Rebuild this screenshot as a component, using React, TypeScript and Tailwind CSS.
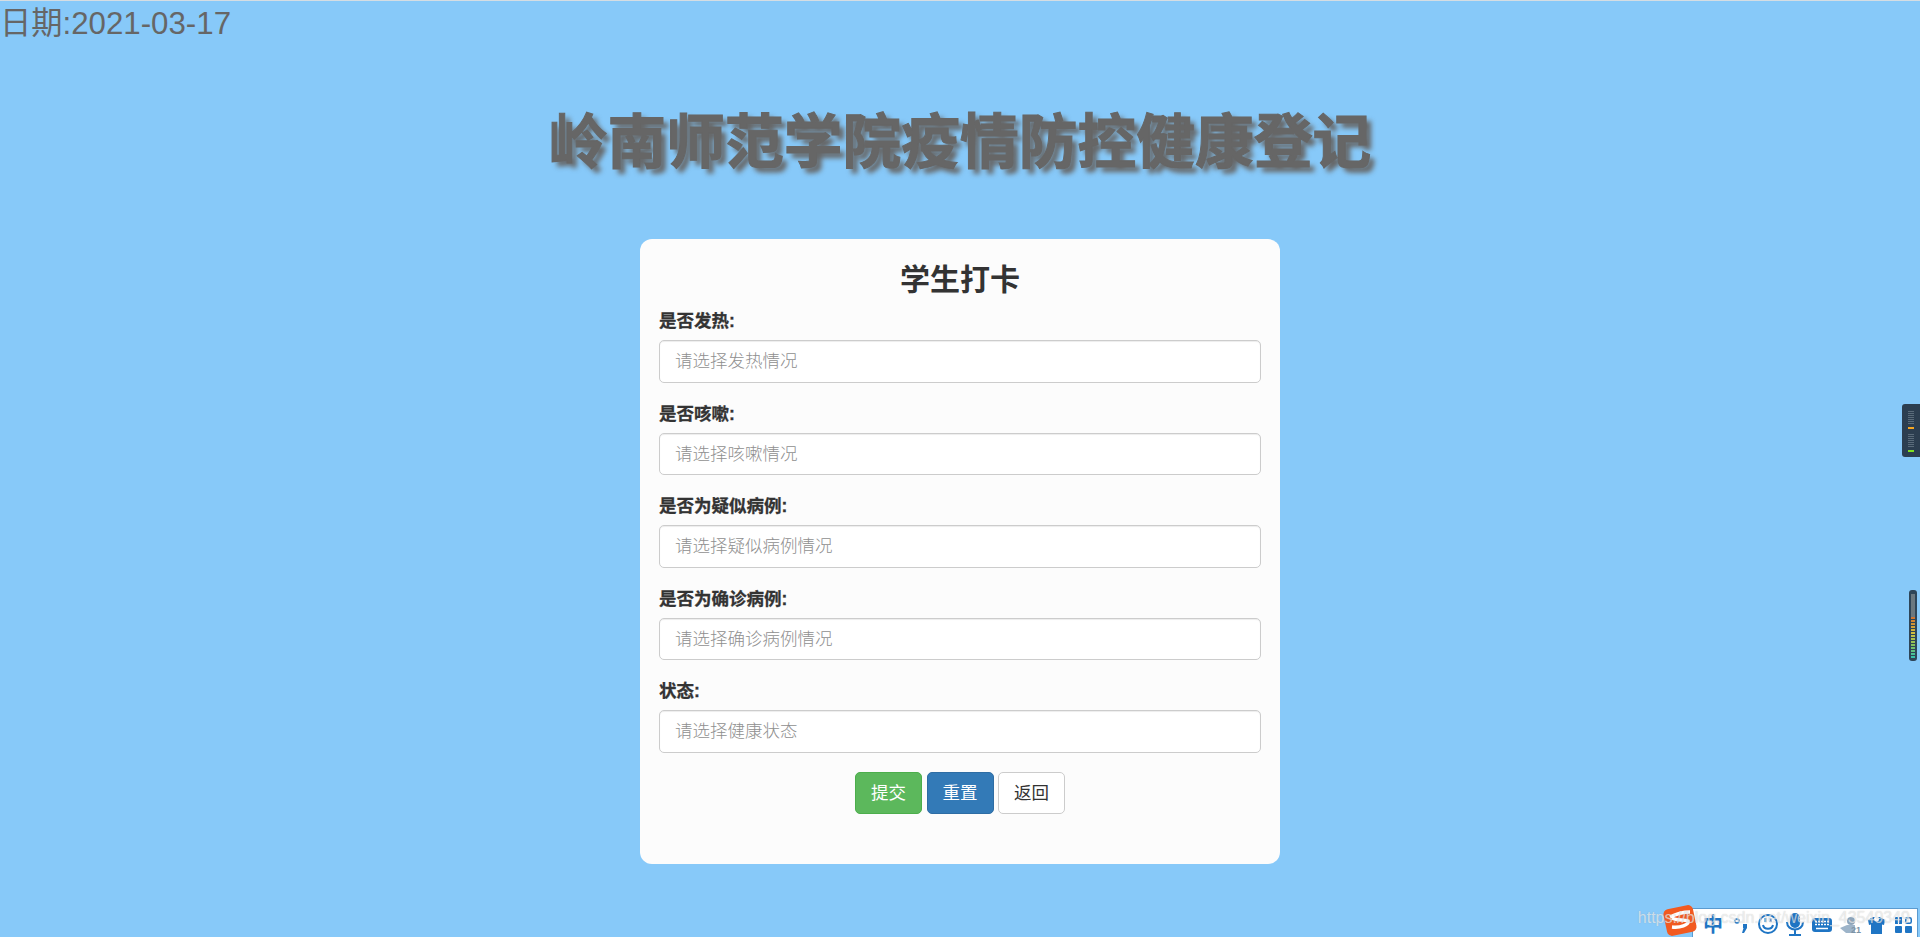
import { FC } from "react";

const fields = [
  { label: "是否发热:", hint: "请选择发热情况" },
  { label: "是否咳嗽:", hint: "请选择咳嗽情况" },
  { label: "是否为疑似病例:", hint: "请选择疑似病例情况" },
  { label: "是否为确诊病例:", hint: "请选择确诊病例情况" },
  { label: "状态:", hint: "请选择健康状态" },
];

const rows = [0, 1, 2, 3, 4, 5, 6];

const ImeBar: FC = () => (
  <div className="absolute right-[2px] bottom-0 h-[29px] w-[226px] border-t border-r border-l border-[#5b9bd0] bg-white">
    <svg className="block" width="224" height="28" viewBox="0 0 224 28" fill="none">
      <text x="20" y="23" textAnchor="middle" fontSize="20" fontWeight="700" fill="#1f75c4" fontFamily="'Noto Sans CJK SC', sans-serif">
        中
      </text>
      <circle cx="44" cy="12" r="2" stroke="#1f75c4" strokeWidth="1.500" />
      <path d="M50 15h4v4l-3 5h-2l1.500-5h-.5z" fill="#1f75c4" />
      <g stroke="#1f75c4" strokeWidth="2">
        <circle cx="75" cy="15" r="9" />
        <path d="M70 16c1 5 9 5 10 0" />
        <path d="M72.500 9v4M77.500 9v4" />
        <rect x="98" y="5" width="8" height="13" rx="4" fill="#1f75c4" />
        <path d="M94 13c0 10 16 10 16 0M102 21v4M96 26h12" />
      </g>
      <rect x="119" y="9" width="20" height="14" rx="3" fill="#1f75c4" />
      <path d="M122 12.500h14M122 15.500h14" stroke="#fff" strokeWidth="1.500" strokeDasharray="2 1" />
      <path d="M123 19.500h12" stroke="#fff" strokeWidth="1.500" />
      <circle cx="158" cy="12" r="4" fill="#8ea6bb" />
      <path d="M147 19l7-3h8v8h-9z" fill="#9db4c9" />
      <text x="163" y="24" textAnchor="middle" fontSize="9" fontWeight="700" fill="#7d93a6" fontFamily="'Liberation Sans', sans-serif">
        21
      </text>
      <path d="M175 11l5-3h7l5 3-1 5-2-.500v9.500h-11v-9.500l-2 .500z" fill="#1f75c4" />
      <circle cx="183.500" cy="10" r="2.500" fill="#fff" />
      <g fill="#1f75c4">
        <rect x="202" y="8" width="3" height="7" rx=".5" />
        <rect x="206" y="8" width="3" height="7" rx=".5" />
        <rect x="202" y="17" width="7" height="7" rx="1" />
        <rect x="212" y="17" width="7" height="7" rx="1" />
      </g>
      <rect x="212.750" y="8.750" width="5.500" height="5.500" rx="1.500" stroke="#1f75c4" strokeWidth="1.500" />
    </svg>
  </div>
);

const SogouLogo: FC = () => (
  <svg className="absolute right-[222px] bottom-0" width="36" height="33" viewBox="0 0 36 33">
    <rect x="3" y="3" width="30" height="27" rx="5" fill="#f25a20" transform="rotate(-12 18 16.500)" />
    <path d="M8 13c6-3 13-5 20-5M10 14c5 3 12 1 16 3 1 4-8 7-16 6" stroke="#fff" strokeWidth="3.500" fill="none" />
  </svg>
);

const App: FC = () => {
  return (
    <div className="relative h-[937px] overflow-hidden border-t border-t-[#d5dde3] bg-[#87c9f9] font-['Liberation_Sans','Noto_Sans_CJK_SC',sans-serif]">
      <div className="text-[31.250px] leading-[45px] text-[#666]">日期:2021-03-17</div>
      <h1 className="mt-[57px] h-[80px] text-center text-[58.750px] leading-[80px] font-bold text-[#666] [-webkit-text-stroke:1px_#666] [text-shadow:5px_5px_5px_#666]">
        岭南师范学院疫情防控健康登记
      </h1>
      <div className="mx-auto mt-[56px] h-[625px] w-[640px] rounded-[12px] bg-[#fcfcfc] px-[19px] pt-[23px]">
        <h3 className="mb-[11px] text-center text-[30px] leading-[36px] font-bold text-[#333]">学生打卡</h3>
        {fields.map(({ label, hint }) => (
          <div key={label} className="mb-[18.750px]">
            <label className="mb-[6.250px] block text-[17.500px] leading-[25px] font-bold text-[#333] [-webkit-text-stroke:0.3px_#333]">{label}</label>
            <input
              readOnly
              placeholder={hint}
              className="block h-[42.500px] w-full rounded-[5px] border border-[#ccc] bg-white px-[15px] text-[17.500px] font-light shadow-[inset_0_1px_1px_rgba(0,0,0,0.075)] placeholder:text-[#8f8f8f]"
            />
          </div>
        ))}
        <div className="flex justify-center gap-[4.500px]">
          <button className="h-[42.500px] w-[67px] rounded-[5px] border border-[#4cae4c] bg-[#5cb85c] text-[17.500px] text-white">提交</button>
          <button className="h-[42.500px] w-[67px] rounded-[5px] border border-[#2e6da4] bg-[#337ab7] text-[17.500px] text-white">重置</button>
          <button className="h-[42.500px] w-[67px] rounded-[5px] border border-[#ccc] bg-white text-[17.500px] text-[#333]">返回</button>
        </div>
      </div>

      <div className="absolute top-[403px] right-0 flex h-[53px] w-[18px] flex-col items-center rounded-l-[3px] bg-[#2c3e50] pt-[7px]">
        {rows.map((i) => (
          <span key={i} className="mb-[1px] h-[1px] w-[6px] bg-[#5a6b7a]" />
        ))}
        <span className="mt-[2px] h-[2px] w-[6px] bg-[#f5a623]" />
        <span className="h-[5px]" />
        {rows.map((i) => (
          <span key={i} className="mb-[1px] h-[1px] w-[6px] bg-[#5a6b7a]" />
        ))}
        <span className="mt-[2px] h-[2px] w-[6px] bg-[#7fe01f]" />
      </div>
      <div className="absolute top-[589px] right-[3px] flex h-[71px] w-[8px] flex-col items-center rounded-[3px] bg-[#2e4558] pt-[4px]">
        <div className="h-[23px] w-[4px] bg-[#6b7880]" />
        <div className="relative h-[41px] w-[4px] bg-[linear-gradient(to_bottom,#d07030,#d0c040_40%,#80c060_70%,#30c0b0)]">
          <div className="absolute inset-0 bg-[repeating-linear-gradient(to_bottom,transparent_0,transparent_2px,#2e4558_2px,#2e4558_3px)]" />
        </div>
      </div>

      <ImeBar />
      <SogouLogo />
      <div className="absolute right-[10px] bottom-[7px] text-[16px] text-white/60 [text-shadow:0_0_1px_rgba(120,120,120,0.4)]">
        https://blog.csdn.net/weixin_43549349
      </div>
    </div>
  );
};

export default App;
